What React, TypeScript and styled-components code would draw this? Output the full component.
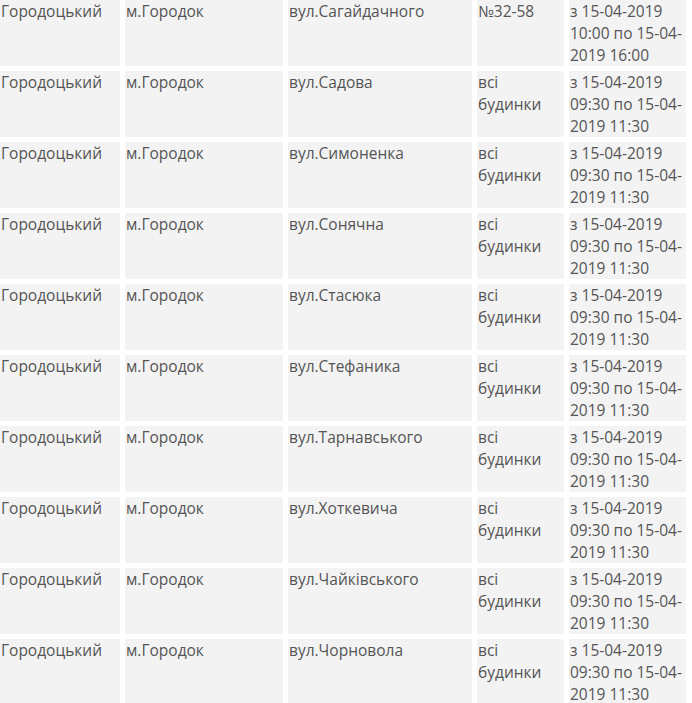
import React from "react";
import styled, { createGlobalStyle } from "styled-components";

const Global = createGlobalStyle`
  html, body { margin: 0; padding: 0; background: #ffffff; }
  body { font-family: "Open Sans", "Noto Sans", sans-serif; overflow: hidden; }
`;

const Table = styled.table`
  border-collapse: separate;
  border-spacing: 5px;
  margin: -5px 0 0 -5px;
  table-layout: fixed;
`;

const Cell = styled.td<{ $w: number }>`
  width: ${(p) => p.$w}px;
  box-sizing: border-box;
  height: 66px;
  padding: 0 1px;
  background: #f3f3f3;
  color: #555555;
  font-size: 15.5px;
  line-height: 22px;
  vertical-align: top;
  text-align: left;
`;

const widths = [120, 158, 184, 87, 117];

type Row = { street: string; houses: string; time: string };

const rows: Row[] = [
  { street: "вул.Сагайдачного", houses: "№32-58", time: "з 15-04-2019 10:00 по 15-04-2019 16:00" },
  { street: "вул.Садова", houses: "всі будинки", time: "з 15-04-2019 09:30 по 15-04-2019 11:30" },
  { street: "вул.Симоненка", houses: "всі будинки", time: "з 15-04-2019 09:30 по 15-04-2019 11:30" },
  { street: "вул.Сонячна", houses: "всі будинки", time: "з 15-04-2019 09:30 по 15-04-2019 11:30" },
  { street: "вул.Стасюка", houses: "всі будинки", time: "з 15-04-2019 09:30 по 15-04-2019 11:30" },
  { street: "вул.Стефаника", houses: "всі будинки", time: "з 15-04-2019 09:30 по 15-04-2019 11:30" },
  { street: "вул.Тарнавського", houses: "всі будинки", time: "з 15-04-2019 09:30 по 15-04-2019 11:30" },
  { street: "вул.Хоткевича", houses: "всі будинки", time: "з 15-04-2019 09:30 по 15-04-2019 11:30" },
  { street: "вул.Чайківського", houses: "всі будинки", time: "з 15-04-2019 09:30 по 15-04-2019 11:30" },
  { street: "вул.Чорновола", houses: "всі будинки", time: "з 15-04-2019 09:30 по 15-04-2019 11:30" },
];

export default function App() {
  return (
    <>
      <Global />
      <Table>
        <tbody>
          {rows.map((r, i) => (
            <tr key={i}>
              <Cell $w={widths[0]}>Городоцький</Cell>
              <Cell $w={widths[1]}>м.Городок</Cell>
              <Cell $w={widths[2]}>{r.street}</Cell>
              <Cell $w={widths[3]}>{r.houses}</Cell>
              <Cell $w={widths[4]}>{r.time}</Cell>
            </tr>
          ))}
        </tbody>
      </Table>
    </>
  );
}
